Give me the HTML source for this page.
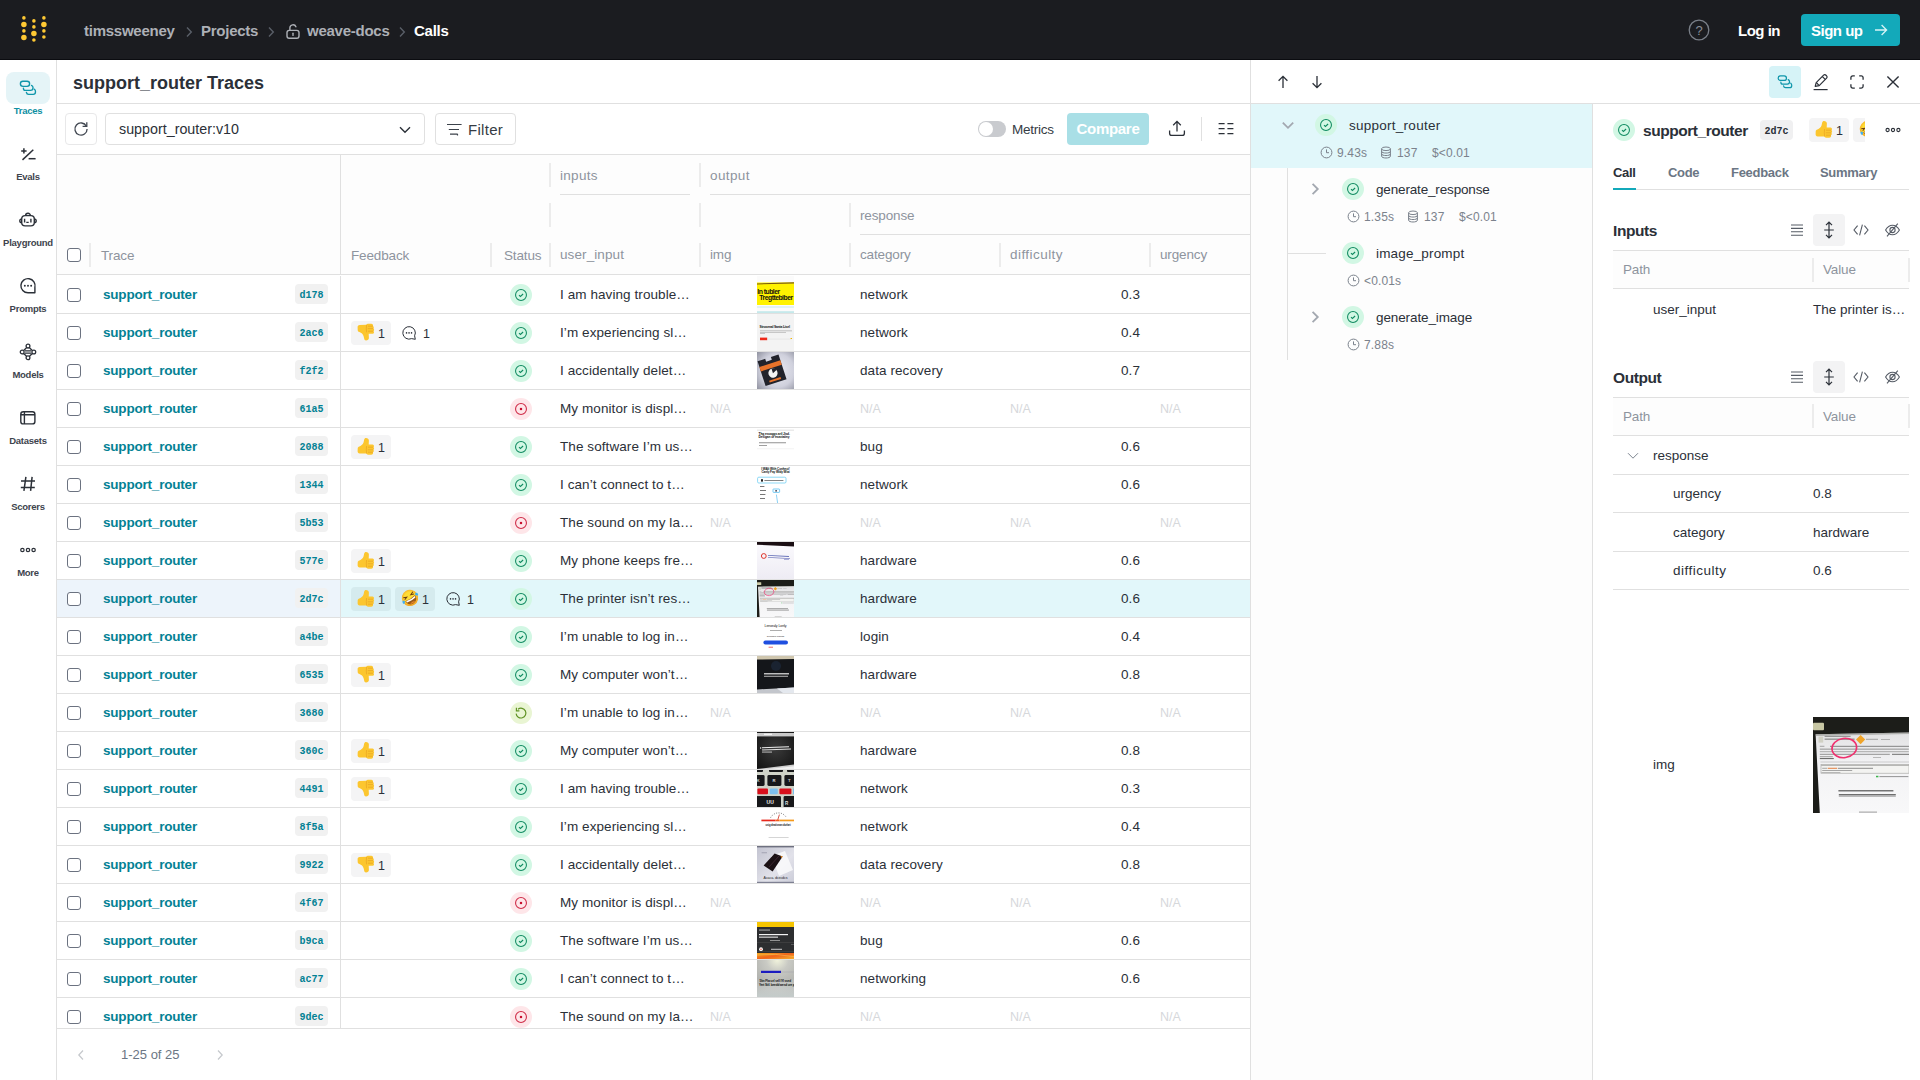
<!DOCTYPE html>
<html lang="en"><head><meta charset="utf-8"><title>support_router Traces</title>
<style>
*{box-sizing:border-box;margin:0;padding:0}
html,body{width:1920px;height:1080px;overflow:hidden;background:#fff}
body{font-family:"Liberation Sans",sans-serif;color:#2b3038;font-size:14px;position:relative}
.abs{position:absolute}
svg{display:block;overflow:visible}
.nw{white-space:nowrap}
/* top bar */
#top{position:absolute;left:0;top:0;width:1920px;height:60px;background:#1b1c20;border-bottom:1px solid #0b0c10}
.bc{position:absolute;top:21px;height:20px;line-height:20px;font-size:15px;font-weight:700;color:#adb0b6;white-space:nowrap;letter-spacing:-0.25px}
.bcs{position:absolute;top:26px}
/* sidebar */
#side{position:absolute;left:0;top:60px;width:57px;height:1020px;border-right:1px solid #e0e0e0;background:#fff}
.si{position:absolute;left:0;width:56px;text-align:center}
.si .lb{position:absolute;left:-10px;width:76px;top:44px;font-size:9.5px;font-weight:700;color:#3e444d;line-height:14px;text-align:center;letter-spacing:-0.25px}
.si svg{position:absolute;left:18px;top:18px}
/* main */
#title{position:absolute;left:57px;top:60px;width:1193px;height:44px;border-bottom:1px solid #e0e0e0}
#title h1{position:absolute;left:16px;top:11px;font-size:18px;line-height:24px;font-weight:700;color:#2b3038;white-space:nowrap;letter-spacing:0}
#tools{position:absolute;left:57px;top:104px;width:1193px;height:51px;border-bottom:1px solid #e0e0e0}
.btn{position:absolute;border:1px solid #e0e0e0;border-radius:4px;background:#fff}
/* table */
#thead{position:absolute;left:57px;top:155px;width:1193px;height:120px;background:#fdfdfd;border-bottom:1px solid #e0e0e0}
.hsep{position:absolute;width:2px;height:24px;background:#ececec;margin-left:-1px}
.hl{position:absolute;height:1px;background:#e0e0e0}
.ht{position:absolute;font-size:13.5px;line-height:20px;color:#8e949e;white-space:nowrap;letter-spacing:-0.15px;margin-top:1px}
#rows{position:absolute;left:57px;top:276px;width:1193px;height:753px;overflow:hidden;border-bottom:1px solid #e0e0e0}
.r{position:absolute;left:0;width:1193px;height:38px;border-bottom:1px solid #e0e0e0}
.r.sel{background:#e2f7fa}
.r.sel .pin{background:#edf4fb}
.pin{position:absolute;left:0;top:0;width:284px;height:37px;border-right:1px solid #e0e0e0;background:#fff}
.cb{position:absolute;left:10px;top:12px;width:14px;height:14px;border:1px solid #6b7280;border-radius:3px;background:#fff}
.nm{position:absolute;left:46px;top:9px;font-size:13.5px;line-height:20px;font-weight:700;color:#038194;white-space:nowrap;letter-spacing:-0.2px}
.idb{position:absolute;left:238px;top:8px;width:33px;height:20px;border-radius:4px;background:#f1f1f1;font-family:"Liberation Mono",monospace;font-weight:700;font-size:10px;line-height:24px;text-align:center;color:#038194}
.c{position:absolute;top:9px;font-size:13.5px;line-height:20px;white-space:nowrap;color:#2b3038;letter-spacing:0.08px}
.na{color:#d6d8db;font-size:12.5px;letter-spacing:0}
.st{position:absolute;left:453px;top:8px;width:22px;height:22px;border-radius:11px}
.st.ok{background:#d2f7e4}
.st.er{background:#fee6e9}
.st.run{background:#e9f5d3}
.st svg{position:absolute;left:3px;top:3px}
.th{position:absolute;left:700px;top:0;width:37px;height:37px;overflow:hidden}
.chip{position:absolute;top:7px;height:24px;width:40px;border-radius:4px;background:#f4f4f5}
.r.sel .chip{background:#d5ebee}
.chip svg{position:absolute;left:6px;top:2px}
.chip b{position:absolute;left:27px;top:3px;font-size:12.5px;line-height:20px;font-weight:400;color:#2b3038}
.cm{position:absolute;top:7px;height:23px;width:40px}
.cm svg{position:absolute;left:6px;top:5px}
.cm b{position:absolute;left:28px;top:3px;font-size:12.5px;line-height:20px;font-weight:400;color:#2b3038}
#foot{position:absolute;left:57px;top:1029px;width:1193px;height:51px}
/* right panel */
#rp{position:absolute;left:1250px;top:60px;width:670px;height:1020px;border-left:1px solid #e0e0e0;background:#fff}
#rph{position:absolute;left:0;top:0;width:669px;height:44px;border-bottom:1px solid #e0e0e0}
#tree{position:absolute;left:0;top:44px;width:342px;height:976px;border-right:1px solid #e0e0e0;background:#fdfdfd}
.tn{position:absolute;font-size:13.5px;line-height:20px;color:#2b3038;white-space:nowrap;letter-spacing:0;margin-top:1px}
.ts{position:absolute;font-size:12px;line-height:18px;color:#7b828c;white-space:nowrap;letter-spacing:0.15px;margin-top:1px}
.sti{position:absolute;width:22px;height:22px;border-radius:11px;background:#d2f7e4}
.sti svg{position:absolute;left:3px;top:3px}
#det{position:absolute;left:342px;top:44px;width:327px;height:976px;overflow:hidden;background:#fff}
.tab{position:absolute;top:59px;font-size:13px;line-height:20px;font-weight:700;color:#6b7684;white-space:nowrap;letter-spacing:-0.3px}
.sec{position:absolute;left:20px;font-size:15.5px;line-height:22px;font-weight:700;color:#2b3038;letter-spacing:-0.4px;margin-top:1px}
.dt{position:absolute;font-size:13.5px;line-height:20px;color:#2b3038;white-space:nowrap;letter-spacing:0;margin-top:1px}
.dhh{font-size:13.5px;color:#8e949e;letter-spacing:-0.15px;margin-top:0}
.dh{position:absolute;left:20px;width:296px;height:39px;background:#fdfdfd;border-top:1px solid #e0e0e0;border-bottom:1px solid #e0e0e0}
.dl{position:absolute;left:20px;width:296px;height:1px;background:#e0e0e0}
</style></head><body>
<div id="top">
 <svg class="abs" style="left:20px;top:14px" width="28" height="30" viewBox="20 14 28 30">
  <g fill="#ffc933">
   <circle cx="23.9" cy="17.9" r="1.8"/><circle cx="23.9" cy="24.5" r="2.75"/><circle cx="23.9" cy="30.9" r="1.8"/><circle cx="23.9" cy="37.5" r="2.75"/>
   <circle cx="33.9" cy="20.9" r="1.8"/><circle cx="33.9" cy="26.9" r="1.8"/><circle cx="33.9" cy="33.4" r="2.75"/><circle cx="33.9" cy="40" r="1.8"/>
   <circle cx="43.9" cy="17.9" r="1.8"/><circle cx="43.9" cy="24.5" r="2.75"/><circle cx="43.9" cy="30.9" r="1.8"/><circle cx="43.9" cy="37" r="1.8"/>
  </g>
 </svg>
 <div class="bc" style="left:84px">timssweeney</div>
 <svg class="bcs" style="left:185px" width="8" height="12" viewBox="0 0 8 12"><path d="M2 1.5 L6.3 6 L2 10.5" fill="none" stroke="#5a5f68" stroke-width="1.4"/></svg>
 <div class="bc" style="left:201px">Projects</div>
 <svg class="bcs" style="left:267px" width="8" height="12" viewBox="0 0 8 12"><path d="M2 1.5 L6.3 6 L2 10.5" fill="none" stroke="#5a5f68" stroke-width="1.4"/></svg>
 <svg class="abs" style="left:285px;top:23px" width="16" height="17" viewBox="0 0 16 17"><g fill="none" stroke="#adb0b6" stroke-width="1.4" stroke-linecap="round"><rect x="2" y="7.4" width="12" height="7.8" rx="2.2"/><path d="M4.9 7.2 V4.8 a3.1 3.1 0 0 1 6 -1"/><path d="M8 10.2 v2.2"/></g></svg>
 <div class="bc" style="left:307px">weave-docs</div>
 <svg class="bcs" style="left:398px" width="8" height="12" viewBox="0 0 8 12"><path d="M2 1.5 L6.3 6 L2 10.5" fill="none" stroke="#5a5f68" stroke-width="1.4"/></svg>
 <div class="bc" style="left:414px;color:#fff">Calls</div>
 <svg class="abs" style="left:1688px;top:19px" width="22" height="22" viewBox="0 0 22 22"><circle cx="11" cy="11" r="9.8" fill="none" stroke="#7a7f88" stroke-width="1.3"/><text x="11" y="15.6" text-anchor="middle" font-family="Liberation Sans, sans-serif" font-size="13" fill="#8a8f98">?</text></svg>
 <div class="bc" style="left:1738px;color:#fff;font-size:15px;letter-spacing:-0.5px">Log in</div>
 <div class="abs" style="left:1801px;top:14px;width:99px;height:32px;border-radius:4px;background:#13a9ba">
  <div class="abs nw" style="left:10px;top:7px;line-height:20px;font-size:15px;font-weight:700;color:#fff;letter-spacing:-0.5px">Sign up</div>
  <svg class="abs" style="left:73px;top:9px" width="14" height="14" viewBox="0 0 14 14"><path d="M1 7 H12.5 M7.6 2 L12.6 7 L7.6 12" fill="none" stroke="#d7f3f6" stroke-width="1.3"/></svg>
 </div>
</div>
<div id="side">
 <div class="abs" style="left:6px;top:12px;width:44px;height:32px;border-radius:8px;background:#e5f4f7"></div>
 <div class="si" style="top:0">
  <svg width="20" height="20" viewBox="0 0 20 20"><g fill="none" stroke="#0f96aa" stroke-width="1.35" stroke-linecap="round"><rect x="2.4" y="3.2" width="9.2" height="5.1" rx="2.5"/><path d="M5.4 10.2 C5.4 11.6 6.2 12.4 7.4 12.4 H12.6 C14.2 12.4 15.05 11.4 15.05 9.8 C15.05 8.6 14.4 7.8 13.5 7.4"/><path d="M8.4 14.4 C8.6 15.6 9.4 16.35 10.6 16.35 H15.2 C16.8 16.35 17.5 15.4 17.5 13.8 C17.5 12.6 17 11.8 16.4 11.3"/></g></svg>
  <div class="lb" style="color:#0f8fa3">Traces</div>
 </div>
 <div class="si" style="top:66px">
  <svg width="20" height="20" viewBox="0 0 20 20"><g fill="none" stroke="#2b3038" stroke-width="1.5"><path d="M4.5 15.9 L15.3 5.7"/><path d="M3.2 6.9 h5.4 M5.9 4.2 v5.4"/><path d="M10.6 14.7 h7"/></g></svg>
  <div class="lb">Evals</div>
 </div>
 <div class="si" style="top:132px">
  <svg width="20" height="20" viewBox="0 0 20 20"><g fill="none" stroke="#2b3038" stroke-width="1.4"><rect x="3.7" y="5.6" width="12.6" height="10.3" rx="3.4"/><path d="M7.6 5.6 a2.4 2.4 0 0 1 4.8 0"/><path d="M3.7 8.9 a1.9 1.9 0 0 0 0 3.8 M16.3 8.9 a1.9 1.9 0 0 1 0 3.8"/><path d="M6.6 8.7 v3.8 M12.9 8.7 v3.8 M8.3 12.4 h2.4"/></g></svg>
  <div class="lb">Playground</div>
 </div>
 <div class="si" style="top:198px">
  <svg width="20" height="20" viewBox="0 0 20 20"><g fill="none" stroke="#2b3038" stroke-width="1.4"><path d="M16.9 16.8 H10 A7.1 7.1 0 1 1 16.9 11.4 Z" stroke-linejoin="round"/></g><g fill="#2b3038"><circle cx="6.85" cy="9.8" r="0.95"/><circle cx="10" cy="9.8" r="0.95"/><circle cx="13.15" cy="9.8" r="0.95"/></g></svg>
  <div class="lb">Prompts</div>
 </div>
 <div class="si" style="top:264px">
  <svg width="20" height="20" viewBox="0 0 20 20"><g fill="none" stroke="#2b3038" stroke-width="1.3"><circle cx="10" cy="4.1" r="1.9"/><circle cx="10" cy="15.8" r="1.9"/><circle cx="4.2" cy="10" r="1.9"/><circle cx="15.8" cy="10" r="1.9"/><path d="M5.7 8.5 L8.5 5.7 M11.5 5.7 L14.3 8.5 M14.3 11.5 L11.5 14.3 M8.5 14.3 L5.7 11.5 M7 8.9 H13 M7 11.1 H13"/></g></svg>
  <div class="lb">Models</div>
 </div>
 <div class="si" style="top:330px">
  <svg width="20" height="20" viewBox="0 0 20 20"><g fill="none" stroke="#2b3038" stroke-width="1.4"><rect x="2.8" y="3.8" width="14.1" height="12.1" rx="2.5"/><path d="M2.8 6.7 H16.9 M6.4 3.8 V15.9"/></g></svg>
  <div class="lb">Datasets</div>
 </div>
 <div class="si" style="top:396px">
  <svg width="20" height="20" viewBox="0 0 20 20"><g fill="none" stroke="#2b3038" stroke-width="1.5"><path d="M7.9 2.9 L5.9 16.9 M14.1 2.9 L12.6 16.9 M3 7 H17 M2.8 13.4 H16.8"/></g></svg>
  <div class="lb">Scorers</div>
 </div>
 <div class="si" style="top:462px">
  <svg width="20" height="20" viewBox="0 0 20 20"><g fill="none" stroke="#2b3038" stroke-width="1.2"><circle cx="4.4" cy="10" r="1.7"/><circle cx="10" cy="10" r="1.7"/><circle cx="15.6" cy="10" r="1.7"/></g></svg>
  <div class="lb">More</div>
 </div>
</div>
<div id="title"><h1>support_router Traces</h1></div>
<div id="tools">
 <div class="btn" style="left:8px;top:9px;width:32px;height:32px;border-color:#e8e8e9"><svg class="abs" style="left:7px;top:7px" width="16" height="16" viewBox="0 0 16 16"><path d="M14.1 8 A6.1 6.1 0 1 1 13.4 5.2" fill="none" stroke="#414751" stroke-width="1.3"/><path d="M13.8 1.2 V5.4 H9.6" fill="none" stroke="#414751" stroke-width="1.3"/></svg></div>
 <div class="btn" style="left:48px;top:9px;width:320px;height:32px">
  <div class="abs nw" style="left:13px;top:5px;line-height:20px;font-size:14.3px;color:#2b3038">support_router:v10</div>
  <svg class="abs" style="left:293px;top:12px" width="12" height="8" viewBox="0 0 12 8"><path d="M1 1.2 L6 6.2 L11 1.2" fill="none" stroke="#2b3038" stroke-width="1.4"/></svg>
 </div>
 <div class="btn" style="left:378px;top:9px;width:81px;height:32px">
  <svg class="abs" style="left:11px;top:8px" width="14" height="14" viewBox="0 0 14 14"><path d="M0 2.5 H14.6 M1.8 7.5 H12 M3 12.1 H10.7 M10.5 12.1 V13.6" fill="none" stroke="#3c424b" stroke-width="1.2"/></svg>
  <div class="abs nw" style="left:32px;top:6px;line-height:20px;font-size:15px;color:#363c44;letter-spacing:0.3px">Filter</div>
 </div>
 <div class="abs" style="left:921px;top:17px;width:28px;height:16px;border-radius:8px;background:#c9cbcf"><div class="abs" style="left:1px;top:1px;width:14px;height:14px;border-radius:7px;background:#fff"></div></div>
 <div class="abs nw" style="left:955px;top:16px;line-height:20px;font-size:13.5px;color:#363c44;letter-spacing:-0.24px">Metrics</div>
 <div class="abs" style="left:1010px;top:9px;width:82px;height:32px;border-radius:4px;background:#a9dfe6"><div class="abs nw" style="left:0;width:82px;text-align:center;top:6px;line-height:20px;font-size:15px;font-weight:700;color:#fff;letter-spacing:-0.3px">Compare</div></div>
 <svg class="abs" style="left:1111px;top:16px" width="18" height="18" viewBox="0 0 18 18"><path d="M9 11.6 V1.6 M5.2 5.2 L9 1.4 L12.8 5.2 M1.6 10.6 V13.2 A2.2 2.2 0 0 0 3.8 15.4 H14.2 A2.2 2.2 0 0 0 16.4 13.2 V10.6" fill="none" stroke="#2b3038" stroke-width="1.3"/></svg>
 <div class="abs" style="left:1144px;top:13px;width:1px;height:24px;background:#e0e0e0"></div>
 <svg class="abs" style="left:1161px;top:18px" width="16" height="14" viewBox="0 0 16 14"><path d="M0.6 1.6 H6.6 M9.4 1.6 H15.4 M0.6 6.6 H6.6 M9.4 6.6 H15.4 M0.6 11.6 H6.6 M9.4 11.6 H15.4" fill="none" stroke="#2b3038" stroke-width="1.3"/></svg>
</div>
<div id="thead">
 <div class="abs" style="left:283px;top:0;width:1px;height:120px;background:#e0e0e0"></div>
 <div class="hsep" style="left:493px;top:8px"></div><div class="hsep" style="left:643px;top:8px"></div>
 <div class="hsep" style="left:493px;top:48px"></div><div class="hsep" style="left:643px;top:48px"></div><div class="hsep" style="left:793px;top:48px"></div>
 <div class="hsep" style="left:33px;top:88px"></div><div class="hsep" style="left:434px;top:88px"></div><div class="hsep" style="left:493px;top:88px"></div><div class="hsep" style="left:643px;top:88px"></div><div class="hsep" style="left:793px;top:88px"></div><div class="hsep" style="left:943px;top:88px"></div><div class="hsep" style="left:1093px;top:88px"></div>
 <div class="hl" style="left:503px;top:39px;width:130px"></div>
 <div class="hl" style="left:653px;top:39px;width:540px"></div>
 <div class="hl" style="left:803px;top:79px;width:390px"></div>
 <div class="ht" style="left:503px;top:10px;letter-spacing:0.3px">inputs</div>
 <div class="ht" style="left:653px;top:10px;letter-spacing:0.4px">output</div>
 <div class="ht" style="left:803px;top:50px">response</div>
 <span class="cb" style="top:93px"></span>
 <div class="ht" style="left:44px;top:90px">Trace</div>
 <div class="ht" style="left:294px;top:90px">Feedback</div>
 <div class="ht" style="left:447px;top:90px">Status</div>
 <div class="ht" style="left:503px;top:89px;letter-spacing:0.1px">user_input</div>
 <div class="ht" style="left:653px;top:89px">img</div>
 <div class="ht" style="left:803px;top:89px">category</div>
 <div class="ht" style="left:953px;top:89px;letter-spacing:0.45px">difficulty</div>
 <div class="ht" style="left:1103px;top:89px">urgency</div>
</div>
<div id="rows">
<div class="r" style="top:0px"><div class="pin"><span class="cb"></span><span class="nm">support_router</span><span class="idb">d178</span></div><span class="st ok"><svg width="16" height="16" viewBox="0 0 16 16"><circle cx="8" cy="8" r="5.45" fill="none" stroke="#0f8a60" stroke-width="1.05"/><path d="M6 8.2 L7.4 9.5 L10.1 7" fill="none" stroke="#0f8a60" stroke-width="1.1"/></svg></span><span class="c" style="left:503px">I am having trouble…</span><svg class="th" viewBox="0 0 37 37" preserveAspectRatio="none"><rect width="37" height="37" fill="#fbfbfb"/><rect y="6.5" width="37" height="22.5" fill="#fff200"/><path d="M0 7.4 L37 6.2 V7.4 L0 8.4 Z" fill="#7a5a10"/><text x="0.3" y="17.8" font-size="6.8" font-family="Liberation Sans, sans-serif" font-weight="700" fill="#111" letter-spacing="-0.5">In tubler</text><text x="2.3" y="24.3" font-size="6.8" font-family="Liberation Sans, sans-serif" font-weight="700" fill="#111" letter-spacing="-0.5">Tregttebiber</text><rect y="30.6" width="37" height="0.8" fill="#bfe6e8"/><rect y="35.6" width="37" height="0.9" fill="#8fd8dc"/></svg><span class="c" style="left:803px">network</span><span class="c" style="left:1040px;width:43px;text-align:right">0.3</span></div>
<div class="r" style="top:38px"><div class="pin"><span class="cb"></span><span class="nm">support_router</span><span class="idb">2ac6</span></div><span class="chip" style="left:294px"><svg width="18" height="18" viewBox="0 0 18 18"><g transform="translate(0,18.4) scale(1,-1)"><path d="M9 0.9 C10.6 0.9 11.9 1.8 11.9 3.4 L11.7 7.6 L15.6 7.6 C17.2 7.8 17.4 9.6 16.5 10.2 C17.4 10.9 17.3 12.4 16.4 12.8 C17.1 13.5 16.9 15 16 15.2 C16.4 16.4 15.6 17.7 14.2 17.7 L11 17.7 C10.2 17.7 9.6 17.2 9.2 16.6 L2.6 16.4 C1.2 16.4 0.6 15.4 0.6 14.2 L0.7 11.4 C0.7 10.2 1.4 9.6 2.4 9.4 C4.4 8.8 6 7.2 6.6 5.2 L7.2 2.6 C7.4 1.6 8 0.9 9 0.9 Z" fill="#fcc62f"/><path d="M11 10.2 H16.2 M10.8 12.8 H16.2 M11 15.2 H15.8 M9.6 9 C9.2 11 9.2 14 9.6 16.4" fill="none" stroke="#e8a422" stroke-width="0.7"/></g></svg><b>1</b></span><span class="cm" style="left:338px"><svg width="16" height="16" viewBox="0 0 16 16"><path d="M14.3 13.3 L10.6 12.6 A6.25 6.25 0 1 1 13.6 9.8 Z" fill="none" stroke="#2b3038" stroke-width="1" stroke-linejoin="round"/><g fill="#2b3038"><circle cx="5.55" cy="6.9" r="0.78"/><circle cx="8.05" cy="6.9" r="0.78"/><circle cx="10.55" cy="6.9" r="0.78"/></g></svg><b>1</b></span><span class="st ok"><svg width="16" height="16" viewBox="0 0 16 16"><circle cx="8" cy="8" r="5.45" fill="none" stroke="#0f8a60" stroke-width="1.05"/><path d="M6 8.2 L7.4 9.5 L10.1 7" fill="none" stroke="#0f8a60" stroke-width="1.1"/></svg></span><span class="c" style="left:503px">I’m experiencing sl…</span><svg class="th" viewBox="0 0 37 37" preserveAspectRatio="none"><rect width="37" height="37" fill="#f3f3f3"/><text x="2.6" y="14" font-size="3.4" font-family="Liberation Sans, sans-serif" font-weight="700" fill="#111" letter-spacing="-0.2">Strosenal Santa Lisel</text><rect x="3" y="16.6" width="32" height="0.6" fill="#999"/><rect x="3" y="18" width="26" height="0.6" fill="#aaa"/><rect x="3" y="19.4" width="5" height="0.6" fill="#aaa"/><rect x="3" y="23.6" width="7.2" height="2.6" fill="#ee2a1a"/><rect x="10.2" y="24.8" width="24" height="0.5" fill="#ddd"/><rect x="33.6" y="24" width="1.4" height="1" fill="#f0b400"/></svg><span class="c" style="left:803px">network</span><span class="c" style="left:1040px;width:43px;text-align:right">0.4</span></div>
<div class="r" style="top:76px"><div class="pin"><span class="cb"></span><span class="nm">support_router</span><span class="idb">f2f2</span></div><span class="st ok"><svg width="16" height="16" viewBox="0 0 16 16"><circle cx="8" cy="8" r="5.45" fill="none" stroke="#0f8a60" stroke-width="1.05"/><path d="M6 8.2 L7.4 9.5 L10.1 7" fill="none" stroke="#0f8a60" stroke-width="1.1"/></svg></span><span class="c" style="left:503px">I accidentally delet…</span><svg class="th" viewBox="0 0 37 37" preserveAspectRatio="none"><defs><radialGradient id="gf2" cx="0.55" cy="0.5" r="0.75"><stop offset="0" stop-color="#ebecf3"/><stop offset="0.6" stop-color="#cfd0dc"/><stop offset="1" stop-color="#8e909e"/></radialGradient></defs><rect width="37" height="37" fill="url(#gf2)"/><g transform="rotate(-18 16 18)"><path d="M4 5 H12 V8 H18 V5 H26 V31 H4 Z" fill="#22232b"/><rect x="4" y="11" width="22" height="4.6" fill="#e8732a"/><circle cx="15" cy="21" r="4.6" fill="#f4f4f4"/><path d="M15 21 L19.6 19 A4.6 4.6 0 0 0 15 16.4 Z" fill="#22232b"/><rect x="9" y="27" width="12" height="2" fill="#e8732a"/></g></svg><span class="c" style="left:803px">data recovery</span><span class="c" style="left:1040px;width:43px;text-align:right">0.7</span></div>
<div class="r" style="top:114px"><div class="pin"><span class="cb"></span><span class="nm">support_router</span><span class="idb">61a5</span></div><span class="st er"><svg width="16" height="16" viewBox="0 0 16 16"><circle cx="8" cy="8" r="5.45" fill="none" stroke="#cf2c48" stroke-width="1.1"/><rect x="6.9" y="6.9" width="2.2" height="2.2" fill="#c8102e"/></svg></span><span class="c" style="left:503px">My monitor is displ…</span><span class="c na" style="left:653px">N/A</span><span class="c na" style="left:803px">N/A</span><span class="c na" style="left:953px">N/A</span><span class="c na" style="left:1103px">N/A</span></div>
<div class="r" style="top:152px"><div class="pin"><span class="cb"></span><span class="nm">support_router</span><span class="idb">2088</span></div><span class="chip" style="left:294px"><svg width="18" height="18" viewBox="0 0 18 18"><path d="M9 0.9 C10.6 0.9 11.9 1.8 11.9 3.4 L11.7 7.6 L15.6 7.6 C17.2 7.8 17.4 9.6 16.5 10.2 C17.4 10.9 17.3 12.4 16.4 12.8 C17.1 13.5 16.9 15 16 15.2 C16.4 16.4 15.6 17.7 14.2 17.7 L11 17.7 C10.2 17.7 9.6 17.2 9.2 16.6 L2.6 16.4 C1.2 16.4 0.6 15.4 0.6 14.2 L0.7 11.4 C0.7 10.2 1.4 9.6 2.4 9.4 C4.4 8.8 6 7.2 6.6 5.2 L7.2 2.6 C7.4 1.6 8 0.9 9 0.9 Z" fill="#fcc62f"/><path d="M11 10.2 H16.2 M10.8 12.8 H16.2 M11 15.2 H15.8 M9.6 9 C9.2 11 9.2 14 9.6 16.4" fill="none" stroke="#e8a422" stroke-width="0.7"/></svg><b>1</b></span><span class="st ok"><svg width="16" height="16" viewBox="0 0 16 16"><circle cx="8" cy="8" r="5.45" fill="none" stroke="#0f8a60" stroke-width="1.05"/><path d="M6 8.2 L7.4 9.5 L10.1 7" fill="none" stroke="#0f8a60" stroke-width="1.1"/></svg></span><span class="c" style="left:503px">The software I’m us…</span><svg class="th" viewBox="0 0 37 37" preserveAspectRatio="none"><rect width="37" height="37" fill="#fff"/><rect y="1.6" width="37" height="1.2" fill="#e6e6e6"/><text x="1.6" y="6.8" font-size="3.3" font-family="Liberation Sans, sans-serif" font-weight="700" fill="#111" letter-spacing="-0.15">Thg essaggs aril Jisd.</text><text x="1.6" y="10.4" font-size="3.3" font-family="Liberation Sans, sans-serif" font-weight="700" fill="#111" letter-spacing="-0.15">Desigan or esaviatiny</text><rect x="2" y="14.4" width="27" height="0.8" fill="#777"/><rect x="2" y="17" width="8" height="0.8" fill="#888"/><rect y="20.4" width="37" height="0.8" fill="#f0f0f0"/></svg><span class="c" style="left:803px">bug</span><span class="c" style="left:1040px;width:43px;text-align:right">0.6</span></div>
<div class="r" style="top:190px"><div class="pin"><span class="cb"></span><span class="nm">support_router</span><span class="idb">1344</span></div><span class="st ok"><svg width="16" height="16" viewBox="0 0 16 16"><circle cx="8" cy="8" r="5.45" fill="none" stroke="#0f8a60" stroke-width="1.05"/><path d="M6 8.2 L7.4 9.5 L10.1 7" fill="none" stroke="#0f8a60" stroke-width="1.1"/></svg></span><span class="c" style="left:503px">I can’t connect to t…</span><svg class="th" viewBox="0 0 37 37" preserveAspectRatio="none"><rect width="37" height="37" fill="#fff"/><text x="18.5" y="3.8" text-anchor="middle" font-size="3.1" font-family="Liberation Sans, sans-serif" font-weight="700" fill="#111" letter-spacing="-0.1">I WAIt With Conhect!</text><text x="18.5" y="7" text-anchor="middle" font-size="3.1" font-family="Liberation Sans, sans-serif" font-weight="700" fill="#111" letter-spacing="-0.1">Canly Fay Widy Wiai</text><rect x="0.6" y="11.2" width="28.4" height="5.8" rx="1.2" fill="#fff" stroke="#5cc8f2" stroke-width="0.7"/><rect x="4" y="13.2" width="2" height="2.4" fill="#222"/><rect x="7.4" y="14" width="19" height="0.8" fill="#666"/><rect x="3" y="20.2" width="4.4" height="0.8" fill="#555"/><rect x="3" y="24.2" width="6" height="0.8" fill="#555"/><rect x="3" y="28.2" width="5.4" height="0.8" fill="#555"/><rect x="3" y="32.2" width="5" height="0.8" fill="#555"/><rect x="16" y="23" width="6.6" height="3.4" rx="0.6" fill="#fff" stroke="#3db4ee" stroke-width="0.7"/><rect x="18.4" y="24" width="1.4" height="1.6" fill="#334"/><path d="M19.4 28.6 L20.6 37" stroke="#3db4ee" stroke-width="0.6" fill="none"/></svg><span class="c" style="left:803px">network</span><span class="c" style="left:1040px;width:43px;text-align:right">0.6</span></div>
<div class="r" style="top:228px"><div class="pin"><span class="cb"></span><span class="nm">support_router</span><span class="idb">5b53</span></div><span class="st er"><svg width="16" height="16" viewBox="0 0 16 16"><circle cx="8" cy="8" r="5.45" fill="none" stroke="#cf2c48" stroke-width="1.1"/><rect x="6.9" y="6.9" width="2.2" height="2.2" fill="#c8102e"/></svg></span><span class="c" style="left:503px">The sound on my la…</span><span class="c na" style="left:653px">N/A</span><span class="c na" style="left:803px">N/A</span><span class="c na" style="left:953px">N/A</span><span class="c na" style="left:1103px">N/A</span></div>
<div class="r" style="top:266px"><div class="pin"><span class="cb"></span><span class="nm">support_router</span><span class="idb">577e</span></div><span class="chip" style="left:294px"><svg width="18" height="18" viewBox="0 0 18 18"><path d="M9 0.9 C10.6 0.9 11.9 1.8 11.9 3.4 L11.7 7.6 L15.6 7.6 C17.2 7.8 17.4 9.6 16.5 10.2 C17.4 10.9 17.3 12.4 16.4 12.8 C17.1 13.5 16.9 15 16 15.2 C16.4 16.4 15.6 17.7 14.2 17.7 L11 17.7 C10.2 17.7 9.6 17.2 9.2 16.6 L2.6 16.4 C1.2 16.4 0.6 15.4 0.6 14.2 L0.7 11.4 C0.7 10.2 1.4 9.6 2.4 9.4 C4.4 8.8 6 7.2 6.6 5.2 L7.2 2.6 C7.4 1.6 8 0.9 9 0.9 Z" fill="#fcc62f"/><path d="M11 10.2 H16.2 M10.8 12.8 H16.2 M11 15.2 H15.8 M9.6 9 C9.2 11 9.2 14 9.6 16.4" fill="none" stroke="#e8a422" stroke-width="0.7"/></svg><b>1</b></span><span class="st ok"><svg width="16" height="16" viewBox="0 0 16 16"><circle cx="8" cy="8" r="5.45" fill="none" stroke="#0f8a60" stroke-width="1.05"/><path d="M6 8.2 L7.4 9.5 L10.1 7" fill="none" stroke="#0f8a60" stroke-width="1.1"/></svg></span><span class="c" style="left:503px">My phone keeps fre…</span><svg class="th" viewBox="0 0 37 37" preserveAspectRatio="none"><defs><linearGradient id="g57" x1="0" y1="0" x2="0" y2="1"><stop offset="0" stop-color="#fbfafd"/><stop offset="1" stop-color="#eeecf4"/></linearGradient></defs><rect width="37" height="37" fill="url(#g57)"/><path d="M0 0 H37 V4.4 L0 2.8 Z" fill="#190d12"/><circle cx="6.8" cy="14" r="2.4" fill="none" stroke="#e0332a" stroke-width="1"/><rect x="11" y="13" width="21" height="0.8" fill="#6670b8" transform="rotate(3 11 13)"/><rect x="11" y="15" width="22" height="0.8" fill="#7a80c0" transform="rotate(3 11 15)"/><rect x="27" y="17.2" width="5" height="0.7" fill="#8a8fcc"/></svg><span class="c" style="left:803px">hardware</span><span class="c" style="left:1040px;width:43px;text-align:right">0.6</span></div>
<div class="r sel" style="top:304px"><div class="pin"><span class="cb"></span><span class="nm">support_router</span><span class="idb">2d7c</span></div><span class="chip" style="left:294px"><svg width="18" height="18" viewBox="0 0 18 18"><path d="M9 0.9 C10.6 0.9 11.9 1.8 11.9 3.4 L11.7 7.6 L15.6 7.6 C17.2 7.8 17.4 9.6 16.5 10.2 C17.4 10.9 17.3 12.4 16.4 12.8 C17.1 13.5 16.9 15 16 15.2 C16.4 16.4 15.6 17.7 14.2 17.7 L11 17.7 C10.2 17.7 9.6 17.2 9.2 16.6 L2.6 16.4 C1.2 16.4 0.6 15.4 0.6 14.2 L0.7 11.4 C0.7 10.2 1.4 9.6 2.4 9.4 C4.4 8.8 6 7.2 6.6 5.2 L7.2 2.6 C7.4 1.6 8 0.9 9 0.9 Z" fill="#fcc62f"/><path d="M11 10.2 H16.2 M10.8 12.8 H16.2 M11 15.2 H15.8 M9.6 9 C9.2 11 9.2 14 9.6 16.4" fill="none" stroke="#e8a422" stroke-width="0.7"/></svg><b>1</b></span><span class="chip" style="left:338px"><svg width="18" height="18" viewBox="0 0 18 18"><defs><radialGradient id="gr" cx="0.5" cy="0.45" r="0.55"><stop offset="0.55" stop-color="#ffdd35"/><stop offset="1" stop-color="#f39c1e"/></radialGradient></defs><g transform="rotate(-32 9 8.9)"><circle cx="9" cy="8.9" r="8.2" fill="url(#gr)"/><path d="M3.2 9.2 Q9 10.6 14.8 9.2 Q14.4 15.4 9 15.4 Q3.6 15.4 3.2 9.2 Z" fill="#9a5a18"/><path d="M3.9 9.7 Q9 11 14.1 9.7 L13.8 11.4 Q9 12.4 4.2 11.4 Z" fill="#fff"/><path d="M6 14 Q9 12.6 12 14 Q9 15.8 6 14 Z" fill="#e8862a"/><path d="M3.4 5.2 L6.6 6.6 L3.6 7.6 M14.6 5.2 L11.4 6.6 L14.4 7.6" fill="none" stroke="#6a3c12" stroke-width="1"/><path d="M1.2 7.4 Q-0.8 9.6 0.8 11 Q2.8 10.6 3 8.4 Z M16.8 7.4 Q18.8 9.6 17.2 11 Q15.2 10.6 15 8.4 Z" fill="#3fb0f0"/></g></svg><b>1</b></span><span class="cm" style="left:382px"><svg width="16" height="16" viewBox="0 0 16 16"><path d="M14.3 13.3 L10.6 12.6 A6.25 6.25 0 1 1 13.6 9.8 Z" fill="none" stroke="#2b3038" stroke-width="1" stroke-linejoin="round"/><g fill="#2b3038"><circle cx="5.55" cy="6.9" r="0.78"/><circle cx="8.05" cy="6.9" r="0.78"/><circle cx="10.55" cy="6.9" r="0.78"/></g></svg><b>1</b></span><span class="st ok"><svg width="16" height="16" viewBox="0 0 16 16"><circle cx="8" cy="8" r="5.45" fill="none" stroke="#0f8a60" stroke-width="1.05"/><path d="M6 8.2 L7.4 9.5 L10.1 7" fill="none" stroke="#0f8a60" stroke-width="1.1"/></svg></span><span class="c" style="left:503px">The printer isn’t res…</span><svg class="th" viewBox="0 0 96 96" preserveAspectRatio="none"><defs><linearGradient id="gpp" x1="0" y1="0" x2="0" y2="1"><stop offset="0.15" stop-color="#e2e2e3"/><stop offset="0.5" stop-color="#f3f3f5"/><stop offset="1" stop-color="#f8f8f9"/></linearGradient></defs><rect width="96" height="96" fill="url(#gpp)"/><path d="M0 0 H96 V15.4 L2.6 17.2 L6.8 96 H0 Z" fill="#1c1d19"/><path d="M2.6 17.2 L96 15.4 V17 L2.8 19 Z" fill="#8e8f8a" opacity="0.6"/><rect x="0" y="5.8" width="11" height="7.4" rx="1" fill="#c8c7a4"/><rect x="5.6" y="19.6" width="4.6" height="6" fill="#d0d0c4"/><rect x="11.6" y="18.8" width="26" height="1.1" fill="#8c8c8c"/><rect x="11.6" y="21.6" width="30" height="1.1" fill="#7c7c7c"/><rect x="53" y="21.8" width="12" height="0.9" fill="#999"/><rect x="68" y="22" width="9" height="0.9" fill="#aaa"/><path d="M47.6 18 L52.2 22.6 L47.6 27.2 L43 22.6 Z" fill="#f0a428"/><rect x="6.8" y="28.8" width="4.6" height="0.9" fill="#999"/><rect x="17" y="28.8" width="79" height="1.1" fill="#8c8c8c"/><rect x="6.8" y="31.6" width="89" height="1.1" fill="#9a9a9a"/><rect x="6.8" y="34.2" width="89" height="1" fill="#a8a8a8"/><rect x="6.8" y="36.8" width="70" height="1.1" fill="#9c9c9c"/><rect x="79" y="36.8" width="17" height="1.1" fill="#7c7c7c"/><rect x="6.8" y="39.2" width="13" height="1" fill="#9c9c9c"/><rect x="6.8" y="41" width="14" height="1.1" fill="#6c6c6c"/><rect x="60" y="40" width="8" height="0.8" fill="#aaa"/><rect x="7.4" y="44.6" width="88.6" height="0.8" fill="#c4c4c2"/><rect x="8" y="47.6" width="88" height="8.6" fill="#f3f3f1" stroke="#a0a09e" stroke-width="0.6"/><rect x="8" y="47.6" width="88" height="1.4" fill="#b8b8b6"/><rect x="9.2" y="50.8" width="5" height="0.9" fill="#9c9c9c"/><rect x="14.8" y="50.8" width="9.4" height="0.9" fill="#e0702c"/><rect x="25" y="50.8" width="35" height="1" fill="#8c8c8c"/><rect x="9.2" y="53" width="30" height="0.9" fill="#9c9c9c"/><rect x="8.4" y="55" width="19" height="0.8" fill="#aaa"/><rect x="63" y="58.8" width="2.4" height="1.5" fill="#3cb44a"/><rect x="66.4" y="59.2" width="29" height="0.9" fill="#888"/><rect x="25.4" y="73.2" width="55" height="1.2" fill="#555"/><rect x="25.8" y="77.2" width="57" height="1.2" fill="#4c4c4c"/><rect x="25.8" y="79.2" width="57" height="0.5" fill="#7c7c7c"/><rect x="46" y="94.6" width="18" height="1" fill="#9c9c9c"/><ellipse cx="31.3" cy="31" rx="12.4" ry="9.6" fill="none" stroke="#f0306e" stroke-width="1.6" transform="rotate(-8 31.3 31)"/></svg><span class="c" style="left:803px">hardware</span><span class="c" style="left:1040px;width:43px;text-align:right">0.6</span></div>
<div class="r" style="top:342px"><div class="pin"><span class="cb"></span><span class="nm">support_router</span><span class="idb">a4be</span></div><span class="st ok"><svg width="16" height="16" viewBox="0 0 16 16"><circle cx="8" cy="8" r="5.45" fill="none" stroke="#0f8a60" stroke-width="1.05"/><path d="M6 8.2 L7.4 9.5 L10.1 7" fill="none" stroke="#0f8a60" stroke-width="1.1"/></svg></span><span class="c" style="left:503px">I’m unable to log in…</span><svg class="th" viewBox="0 0 37 37" preserveAspectRatio="none"><rect width="37" height="37" fill="#fff"/><text x="18.5" y="9" text-anchor="middle" font-size="3.6" font-family="Liberation Sans, sans-serif" fill="#111" letter-spacing="-0.1">Lenoraly Lonly</text><rect x="13" y="12.4" width="12" height="0.6" fill="#777"/><text x="18.5" y="19" text-anchor="middle" font-size="2.5" font-family="Liberation Sans, sans-serif" fill="#222">Trendrin onlosd</text><rect x="6.4" y="22.6" width="24.6" height="4" rx="2" fill="#1f4fe0"/><rect x="11.6" y="28.8" width="4.4" height="0.7" fill="#e03030"/></svg><span class="c" style="left:803px">login</span><span class="c" style="left:1040px;width:43px;text-align:right">0.4</span></div>
<div class="r" style="top:380px"><div class="pin"><span class="cb"></span><span class="nm">support_router</span><span class="idb">6535</span></div><span class="chip" style="left:294px"><svg width="18" height="18" viewBox="0 0 18 18"><g transform="translate(0,18.4) scale(1,-1)"><path d="M9 0.9 C10.6 0.9 11.9 1.8 11.9 3.4 L11.7 7.6 L15.6 7.6 C17.2 7.8 17.4 9.6 16.5 10.2 C17.4 10.9 17.3 12.4 16.4 12.8 C17.1 13.5 16.9 15 16 15.2 C16.4 16.4 15.6 17.7 14.2 17.7 L11 17.7 C10.2 17.7 9.6 17.2 9.2 16.6 L2.6 16.4 C1.2 16.4 0.6 15.4 0.6 14.2 L0.7 11.4 C0.7 10.2 1.4 9.6 2.4 9.4 C4.4 8.8 6 7.2 6.6 5.2 L7.2 2.6 C7.4 1.6 8 0.9 9 0.9 Z" fill="#fcc62f"/><path d="M11 10.2 H16.2 M10.8 12.8 H16.2 M11 15.2 H15.8 M9.6 9 C9.2 11 9.2 14 9.6 16.4" fill="none" stroke="#e8a422" stroke-width="0.7"/></g></svg><b>1</b></span><span class="st ok"><svg width="16" height="16" viewBox="0 0 16 16"><circle cx="8" cy="8" r="5.45" fill="none" stroke="#0f8a60" stroke-width="1.05"/><path d="M6 8.2 L7.4 9.5 L10.1 7" fill="none" stroke="#0f8a60" stroke-width="1.1"/></svg></span><span class="c" style="left:503px">My computer won’t…</span><svg class="th" viewBox="0 0 37 37" preserveAspectRatio="none"><rect width="37" height="37" fill="#14161a"/><path d="M0 0 H37 V3 L0 3.6 Z" fill="#cfc6ae"/><circle cx="19" cy="10" r="5" fill="#1c2a3c" opacity="0.7"/><rect x="7" y="17.2" width="25" height="1.2" fill="#e8e8e8"/><rect x="7" y="19.8" width="24" height="0.9" fill="#c8c8c8"/><path d="M0 33.4 L37 31.6 V37 H0 Z" fill="#c3c6cc"/><path d="M20 32.4 L37 31.6 V37 H26 Z" fill="#e4e8ee"/></svg><span class="c" style="left:803px">hardware</span><span class="c" style="left:1040px;width:43px;text-align:right">0.8</span></div>
<div class="r" style="top:418px"><div class="pin"><span class="cb"></span><span class="nm">support_router</span><span class="idb">3680</span></div><span class="st run"><svg width="16" height="16" viewBox="0 0 16 16"><path d="M3.1 8.6 A4.9 4.9 0 1 0 5 4.2" fill="none" stroke="#5f9222" stroke-width="1.15"/><path d="M3.4 2.7 V5.8 H6.4" fill="none" stroke="#5f9222" stroke-width="1.15"/></svg></span><span class="c" style="left:503px">I’m unable to log in…</span><span class="c na" style="left:653px">N/A</span><span class="c na" style="left:803px">N/A</span><span class="c na" style="left:953px">N/A</span><span class="c na" style="left:1103px">N/A</span></div>
<div class="r" style="top:456px"><div class="pin"><span class="cb"></span><span class="nm">support_router</span><span class="idb">360c</span></div><span class="chip" style="left:294px"><svg width="18" height="18" viewBox="0 0 18 18"><path d="M9 0.9 C10.6 0.9 11.9 1.8 11.9 3.4 L11.7 7.6 L15.6 7.6 C17.2 7.8 17.4 9.6 16.5 10.2 C17.4 10.9 17.3 12.4 16.4 12.8 C17.1 13.5 16.9 15 16 15.2 C16.4 16.4 15.6 17.7 14.2 17.7 L11 17.7 C10.2 17.7 9.6 17.2 9.2 16.6 L2.6 16.4 C1.2 16.4 0.6 15.4 0.6 14.2 L0.7 11.4 C0.7 10.2 1.4 9.6 2.4 9.4 C4.4 8.8 6 7.2 6.6 5.2 L7.2 2.6 C7.4 1.6 8 0.9 9 0.9 Z" fill="#fcc62f"/><path d="M11 10.2 H16.2 M10.8 12.8 H16.2 M11 15.2 H15.8 M9.6 9 C9.2 11 9.2 14 9.6 16.4" fill="none" stroke="#e8a422" stroke-width="0.7"/></svg><b>1</b></span><span class="st ok"><svg width="16" height="16" viewBox="0 0 16 16"><circle cx="8" cy="8" r="5.45" fill="none" stroke="#0f8a60" stroke-width="1.05"/><path d="M6 8.2 L7.4 9.5 L10.1 7" fill="none" stroke="#0f8a60" stroke-width="1.1"/></svg></span><span class="c" style="left:503px">My computer won’t…</span><svg class="th" viewBox="0 0 37 37" preserveAspectRatio="none"><defs><radialGradient id="g36" cx="0.5" cy="0.45" r="0.7"><stop offset="0" stop-color="#3a3a3a"/><stop offset="1" stop-color="#141414"/></radialGradient></defs><rect width="37" height="37" fill="url(#g36)"/><rect y="1" width="37" height="3.4" fill="#c9c9c9"/><rect x="7" y="1.6" width="8" height="1.4" fill="#f2f2f2"/><rect x="3" y="15.4" width="1.2" height="1.2" fill="#fff"/><rect x="5" y="15.2" width="27" height="1" fill="#ededed" transform="rotate(-2 5 15)"/><rect x="5" y="17.4" width="29" height="1" fill="#e0e0e0" transform="rotate(-2 5 17)"/><rect x="5" y="19.6" width="10" height="0.9" fill="#d0d0d0"/><path d="M0 37 L37 32.6 V37 Z" fill="#cfcfcf"/><path d="M12 37 L37 34.2 V37 Z" fill="#f0f0f0"/></svg><span class="c" style="left:803px">hardware</span><span class="c" style="left:1040px;width:43px;text-align:right">0.8</span></div>
<div class="r" style="top:494px"><div class="pin"><span class="cb"></span><span class="nm">support_router</span><span class="idb">4491</span></div><span class="chip" style="left:294px"><svg width="18" height="18" viewBox="0 0 18 18"><g transform="translate(0,18.4) scale(1,-1)"><path d="M9 0.9 C10.6 0.9 11.9 1.8 11.9 3.4 L11.7 7.6 L15.6 7.6 C17.2 7.8 17.4 9.6 16.5 10.2 C17.4 10.9 17.3 12.4 16.4 12.8 C17.1 13.5 16.9 15 16 15.2 C16.4 16.4 15.6 17.7 14.2 17.7 L11 17.7 C10.2 17.7 9.6 17.2 9.2 16.6 L2.6 16.4 C1.2 16.4 0.6 15.4 0.6 14.2 L0.7 11.4 C0.7 10.2 1.4 9.6 2.4 9.4 C4.4 8.8 6 7.2 6.6 5.2 L7.2 2.6 C7.4 1.6 8 0.9 9 0.9 Z" fill="#fcc62f"/><path d="M11 10.2 H16.2 M10.8 12.8 H16.2 M11 15.2 H15.8 M9.6 9 C9.2 11 9.2 14 9.6 16.4" fill="none" stroke="#e8a422" stroke-width="0.7"/></g></svg><b>1</b></span><span class="st ok"><svg width="16" height="16" viewBox="0 0 16 16"><circle cx="8" cy="8" r="5.45" fill="none" stroke="#0f8a60" stroke-width="1.05"/><path d="M6 8.2 L7.4 9.5 L10.1 7" fill="none" stroke="#0f8a60" stroke-width="1.1"/></svg></span><span class="c" style="left:503px">I am having trouble…</span><svg class="th" viewBox="0 0 37 37" preserveAspectRatio="none"><rect width="37" height="37" fill="#cfd3c8"/><g fill="#17181a"><rect x="-2" y="-3" width="8" height="5" rx="1"/><rect x="12" y="-3" width="14" height="5" rx="1"/><rect x="30" y="-3" width="9" height="5" rx="1"/><rect x="-4" y="5" width="11.6" height="11" rx="1.4"/><rect x="10.4" y="5" width="14" height="11" rx="1.4"/><rect x="27.4" y="5" width="12" height="11" rx="1.4"/><rect x="-2" y="26" width="26" height="12" rx="1.4"/><rect x="26.6" y="26" width="12" height="12" rx="1.4"/></g><rect x="0.4" y="18.6" width="10.6" height="5.6" rx="1" fill="#d8101c"/><rect x="12.8" y="18.6" width="8" height="5.6" rx="1" fill="#7cc0ee"/><rect x="22.4" y="18.6" width="12" height="5.6" rx="1" fill="#d8101c"/><rect x="36" y="18.6" width="2" height="5.6" fill="#7cc0ee"/><text x="15.6" y="12.4" font-size="4.2" font-family="Liberation Sans, sans-serif" font-weight="700" fill="#ddd">R</text><text x="31" y="12.4" font-size="4.2" font-family="Liberation Sans, sans-serif" font-weight="700" fill="#ccc">T</text><text x="9.6" y="34" font-size="5" font-family="Liberation Sans, sans-serif" font-weight="700" fill="#eee">UU</text><text x="28" y="34.6" font-size="4.6" font-family="Liberation Sans, sans-serif" font-weight="700" fill="#ddd">R</text><text x="0" y="12" font-size="3.6" font-family="Liberation Sans, sans-serif" font-weight="700" fill="#ccc">K</text></svg><span class="c" style="left:803px">network</span><span class="c" style="left:1040px;width:43px;text-align:right">0.3</span></div>
<div class="r" style="top:532px"><div class="pin"><span class="cb"></span><span class="nm">support_router</span><span class="idb">8f5a</span></div><span class="st ok"><svg width="16" height="16" viewBox="0 0 16 16"><circle cx="8" cy="8" r="5.45" fill="none" stroke="#0f8a60" stroke-width="1.05"/><path d="M6 8.2 L7.4 9.5 L10.1 7" fill="none" stroke="#0f8a60" stroke-width="1.1"/></svg></span><span class="c" style="left:503px">I’m experiencing sl…</span><svg class="th" viewBox="0 0 37 37" preserveAspectRatio="none"><rect width="37" height="37" fill="#fff"/><path d="M13.6 9.6 A9 9 0 0 1 29.4 9.6" fill="none" stroke="#555" stroke-width="0.9" stroke-dasharray="0.9 1.5"/><path d="M20.6 12.4 L22.4 6.6" stroke="#c8281c" stroke-width="0.8"/><rect x="4.4" y="11.6" width="14" height="1.7" fill="#e8281c"/><rect x="18.4" y="11.6" width="4" height="1.7" fill="#f05a1c"/><rect x="22.4" y="11.6" width="14.6" height="1.7" fill="#f59a1c"/><text x="21" y="18.2" text-anchor="middle" font-size="2.6" font-family="Liberation Sans, sans-serif" font-weight="700" fill="#222" letter-spacing="-0.1">usig dnatisnan dorlart</text><rect x="11.6" y="29" width="20" height="0.5" fill="#aaa"/></svg><span class="c" style="left:803px">network</span><span class="c" style="left:1040px;width:43px;text-align:right">0.4</span></div>
<div class="r" style="top:570px"><div class="pin"><span class="cb"></span><span class="nm">support_router</span><span class="idb">9922</span></div><span class="chip" style="left:294px"><svg width="18" height="18" viewBox="0 0 18 18"><g transform="translate(0,18.4) scale(1,-1)"><path d="M9 0.9 C10.6 0.9 11.9 1.8 11.9 3.4 L11.7 7.6 L15.6 7.6 C17.2 7.8 17.4 9.6 16.5 10.2 C17.4 10.9 17.3 12.4 16.4 12.8 C17.1 13.5 16.9 15 16 15.2 C16.4 16.4 15.6 17.7 14.2 17.7 L11 17.7 C10.2 17.7 9.6 17.2 9.2 16.6 L2.6 16.4 C1.2 16.4 0.6 15.4 0.6 14.2 L0.7 11.4 C0.7 10.2 1.4 9.6 2.4 9.4 C4.4 8.8 6 7.2 6.6 5.2 L7.2 2.6 C7.4 1.6 8 0.9 9 0.9 Z" fill="#fcc62f"/><path d="M11 10.2 H16.2 M10.8 12.8 H16.2 M11 15.2 H15.8 M9.6 9 C9.2 11 9.2 14 9.6 16.4" fill="none" stroke="#e8a422" stroke-width="0.7"/></g></svg><b>1</b></span><span class="st ok"><svg width="16" height="16" viewBox="0 0 16 16"><circle cx="8" cy="8" r="5.45" fill="none" stroke="#0f8a60" stroke-width="1.05"/><path d="M6 8.2 L7.4 9.5 L10.1 7" fill="none" stroke="#0f8a60" stroke-width="1.1"/></svg></span><span class="c" style="left:503px">I accidentally delet…</span><svg class="th" viewBox="0 0 37 37" preserveAspectRatio="none"><defs><linearGradient id="g99" x1="0" y1="0" x2="1" y2="1"><stop offset="0" stop-color="#c2c3d0"/><stop offset="0.6" stop-color="#e2e2ea"/><stop offset="1" stop-color="#cbccd8"/></linearGradient></defs><rect width="37" height="37" fill="url(#g99)"/><rect width="37" height="1.4" fill="#6e7080"/><path d="M14 10 L28 5 L36 24 L22 30 Z" fill="#fafafc" opacity="0.85"/><path d="M17.6 7.6 L25.6 10.6 L15.6 25.6 L6.6 19.6 Z" fill="#1b1115"/><path d="M23.4 9.8 L25.6 10.6 L24.6 12.2 Z" fill="#ee8a1c"/><path d="M12 21 L22 10" stroke="#5a3a4a" stroke-width="0.5"/><rect x="4.6" y="6.4" width="5.4" height="0.8" fill="#99a"/><text x="18.5" y="33" text-anchor="middle" font-size="3.6" font-family="Liberation Sans, sans-serif" fill="#222" letter-spacing="-0.1">Acaca. dcecdcs</text><rect y="35.8" width="37" height="1.2" fill="#7e8092"/></svg><span class="c" style="left:803px">data recovery</span><span class="c" style="left:1040px;width:43px;text-align:right">0.8</span></div>
<div class="r" style="top:608px"><div class="pin"><span class="cb"></span><span class="nm">support_router</span><span class="idb">4f67</span></div><span class="st er"><svg width="16" height="16" viewBox="0 0 16 16"><circle cx="8" cy="8" r="5.45" fill="none" stroke="#cf2c48" stroke-width="1.1"/><rect x="6.9" y="6.9" width="2.2" height="2.2" fill="#c8102e"/></svg></span><span class="c" style="left:503px">My monitor is displ…</span><span class="c na" style="left:653px">N/A</span><span class="c na" style="left:803px">N/A</span><span class="c na" style="left:953px">N/A</span><span class="c na" style="left:1103px">N/A</span></div>
<div class="r" style="top:646px"><div class="pin"><span class="cb"></span><span class="nm">support_router</span><span class="idb">b9ca</span></div><span class="st ok"><svg width="16" height="16" viewBox="0 0 16 16"><circle cx="8" cy="8" r="5.45" fill="none" stroke="#0f8a60" stroke-width="1.05"/><path d="M6 8.2 L7.4 9.5 L10.1 7" fill="none" stroke="#0f8a60" stroke-width="1.1"/></svg></span><span class="c" style="left:503px">The software I’m us…</span><svg class="th" viewBox="0 0 37 37" preserveAspectRatio="none"><defs><linearGradient id="gb9" x1="0" y1="0" x2="1" y2="1"><stop offset="0" stop-color="#f5a81c"/><stop offset="0.5" stop-color="#f0641c"/><stop offset="1" stop-color="#f7b02c"/></linearGradient></defs><rect width="37" height="37" fill="#2d2e30"/><rect width="37" height="5" fill="#f6c500"/><rect y="31" width="37" height="6" fill="url(#gb9)"/><path d="M0 33 Q18 31 37 34.6" stroke="#f8d05c" stroke-width="0.5" fill="none"/><rect x="2" y="7.6" width="11" height="0.9" fill="#bbb"/><rect x="2" y="12" width="29" height="1.2" fill="#f2f2f2"/><rect x="2" y="14.6" width="19" height="1.1" fill="#e4e4e4"/><rect x="13" y="18" width="10" height="0.8" fill="#aaa"/><rect y="20.4" width="37" height="0.4" fill="#555"/><rect x="34" y="22.4" width="3" height="0.5" fill="#888"/><circle cx="4" cy="27.2" r="1.9" fill="#fff"/><circle cx="4" cy="27.2" r="0.8" fill="#e85a4a"/><rect x="14" y="26.8" width="11" height="0.9" fill="#ddd"/><rect y="29.6" width="37" height="0.4" fill="#555"/></svg><span class="c" style="left:803px">bug</span><span class="c" style="left:1040px;width:43px;text-align:right">0.6</span></div>
<div class="r" style="top:684px"><div class="pin"><span class="cb"></span><span class="nm">support_router</span><span class="idb">ac77</span></div><span class="st ok"><svg width="16" height="16" viewBox="0 0 16 16"><circle cx="8" cy="8" r="5.45" fill="none" stroke="#0f8a60" stroke-width="1.05"/><path d="M6 8.2 L7.4 9.5 L10.1 7" fill="none" stroke="#0f8a60" stroke-width="1.1"/></svg></span><span class="c" style="left:503px">I can’t connect to t…</span><svg class="th" viewBox="0 0 37 37" preserveAspectRatio="none"><defs><radialGradient id="gac" cx="0.55" cy="0.0" r="1.0"><stop offset="0" stop-color="#f1f3dc"/><stop offset="0.3" stop-color="#c9cac4"/><stop offset="0.7" stop-color="#b3b4b0"/><stop offset="1" stop-color="#9a9c98"/></radialGradient><linearGradient id="gac2" x1="0" y1="0" x2="0" y2="1"><stop offset="0.5" stop-color="#fff" stop-opacity="0"/><stop offset="1" stop-color="#c8d0cf" stop-opacity="0.9"/></linearGradient></defs><rect width="37" height="37" fill="url(#gac)"/><rect width="37" height="37" fill="url(#gac2)"/><rect x="4" y="10.8" width="20" height="2.2" fill="#1c1cc0"/><rect x="24" y="11.8" width="13" height="0.4" fill="#99a"/><text x="2.6" y="21.6" font-size="3.1" font-family="Liberation Sans, sans-serif" font-weight="700" fill="#111" letter-spacing="-0.15">5kn Flw cel sell IYI ssed</text><text x="2" y="26.2" font-size="3.1" font-family="Liberation Sans, sans-serif" font-weight="700" fill="#111" letter-spacing="-0.15">Yert Stif. beedd wesd ure p</text></svg><span class="c" style="left:803px">networking</span><span class="c" style="left:1040px;width:43px;text-align:right">0.6</span></div>
<div class="r" style="top:722px"><div class="pin"><span class="cb"></span><span class="nm">support_router</span><span class="idb">9dec</span></div><span class="st er"><svg width="16" height="16" viewBox="0 0 16 16"><circle cx="8" cy="8" r="5.45" fill="none" stroke="#cf2c48" stroke-width="1.1"/><rect x="6.9" y="6.9" width="2.2" height="2.2" fill="#c8102e"/></svg></span><span class="c" style="left:503px">The sound on my la…</span><span class="c na" style="left:653px">N/A</span><span class="c na" style="left:803px">N/A</span><span class="c na" style="left:953px">N/A</span><span class="c na" style="left:1103px">N/A</span></div>
</div>
<div id="foot">
 <svg class="abs" style="left:20px;top:20px" width="8" height="12" viewBox="0 0 8 12"><path d="M6 1.5 L1.8 6 L6 10.5" fill="none" stroke="#c5c8cc" stroke-width="1.2"/></svg>
 <div class="abs nw" style="left:64px;top:16px;line-height:20px;font-size:13px;color:#6b7684;letter-spacing:0">1-25 of 25</div>
 <svg class="abs" style="left:159px;top:20px" width="8" height="12" viewBox="0 0 8 12"><path d="M2 1.5 L6.2 6 L2 10.5" fill="none" stroke="#c5c8cc" stroke-width="1.2"/></svg>
</div>
<div id="rp">
 <div id="rph">
  <svg class="abs" style="left:25px;top:15px" width="14" height="14" viewBox="0 0 14 14"><path d="M7 13 V1.4 M2.6 5.8 L7 1.4 L11.4 5.8" fill="none" stroke="#2b3038" stroke-width="1.3"/></svg>
  <svg class="abs" style="left:59px;top:15px" width="14" height="14" viewBox="0 0 14 14"><path d="M7 1 V12.6 M2.6 8.2 L7 12.6 L11.4 8.2" fill="none" stroke="#2b3038" stroke-width="1.3"/></svg>
  <div class="abs" style="left:518px;top:6px;width:32px;height:32px;border-radius:4px;background:#d6f3f7"><svg class="abs" style="left:7px;top:7px" width="18" height="18" viewBox="0 0 20 20"><g fill="none" stroke="#0f96aa" stroke-width="1.35" stroke-linecap="round"><rect x="2.4" y="3.2" width="9.2" height="5.1" rx="2.5"/><path d="M5.4 10.2 C5.4 11.6 6.2 12.4 7.4 12.4 H12.6 C14.2 12.4 15.05 11.4 15.05 9.8 C15.05 8.6 14.4 7.8 13.5 7.4"/><path d="M8.4 14.4 C8.6 15.6 9.4 16.35 10.6 16.35 H15.2 C16.8 16.35 17.5 15.4 17.5 13.8 C17.5 12.6 17 11.8 16.4 11.3"/></g></svg></div>
  <svg class="abs" style="left:561px;top:13px" width="18" height="18" viewBox="0 0 18 18"><g fill="none" stroke="#2b3038" stroke-width="1.2" stroke-linejoin="round"><path d="M3.2 13.4 L4.2 9.6 L11.6 2.2 A1.7 1.7 0 0 1 14 2.2 L14.6 2.8 A1.7 1.7 0 0 1 14.6 5.2 L7.2 12.6 Z"/><path d="M10.4 3.6 L13.2 6.4 M4.4 9.6 L7 12.4"/><path d="M1.6 16.6 H15.6"/></g></svg>
  <svg class="abs" style="left:598px;top:14px" width="16" height="16" viewBox="0 0 16 16"><path d="M1.9 5.8 V3.7 A1.8 1.8 0 0 1 3.7 1.9 H5.8 M10.2 1.9 H12.3 A1.8 1.8 0 0 1 14.1 3.7 V5.8 M14.1 10.2 V12.3 A1.8 1.8 0 0 1 12.3 14.1 H10.2 M5.8 14.1 H3.7 A1.8 1.8 0 0 1 1.9 12.3 V10.2" fill="none" stroke="#2b3038" stroke-width="1.3"/></svg>
  <svg class="abs" style="left:635px;top:15px" width="14" height="14" viewBox="0 0 14 14"><path d="M1.4 1.4 L12.6 12.6 M12.6 1.4 L1.4 12.6" fill="none" stroke="#2b3038" stroke-width="1.4"/></svg>
 </div>
 <div id="tree">
  <div class="abs" style="left:0;top:0;width:341px;height:64px;background:#e1f7fa"></div>
  <div class="abs" style="left:36px;top:64px;width:1px;height:192px;background:#e0e0e0"></div>
  <div class="abs" style="left:36px;top:149px;width:39px;height:1px;background:#e0e0e0"></div>
  <svg class="abs" style="left:30px;top:17px" width="14" height="9" viewBox="0 0 14 9"><path d="M1.8 1.6 L7 6.8 L12.2 1.6" fill="none" stroke="#a3a8b0" stroke-width="1.8"/></svg>
  <span class="sti" style="left:64px;top:10px"><svg width="16" height="16" viewBox="0 0 16 16"><circle cx="8" cy="8" r="5.45" fill="none" stroke="#0f8a60" stroke-width="1.05"/><path d="M6 8.2 L7.4 9.5 L10.1 7" fill="none" stroke="#0f8a60" stroke-width="1.1"/></svg></span>
  <div class="tn" style="left:98px;top:11px;letter-spacing:0.26px">support_router</div>
  <svg class="abs" style="left:69px;top:42px" width="13" height="13" viewBox="0 0 13 13"><circle cx="6.5" cy="6.5" r="5.4" fill="none" stroke="#7b828c" stroke-width="1"/><path d="M6.5 3.4 V6.7 H9" fill="none" stroke="#7b828c" stroke-width="1"/></svg>
  <div class="ts" style="left:86px;top:39px">9.43s</div>
  <svg class="abs" style="left:129px;top:42px" width="12" height="13" viewBox="0 0 12 13"><g fill="none" stroke="#7b828c" stroke-width="1"><ellipse cx="6" cy="2.8" rx="4.4" ry="1.8"/><path d="M1.6 2.8 V10.2 C1.6 12.6 10.4 12.6 10.4 10.2 V2.8 M1.6 5.4 C1.6 7.6 10.4 7.6 10.4 5.4 M1.6 7.9 C1.6 10.1 10.4 10.1 10.4 7.9"/></g></svg>
  <div class="ts" style="left:146px;top:39px">137</div>
  <div class="ts" style="left:181px;top:39px">$&lt;0.01</div>

  <svg class="abs" style="left:60px;top:78px" width="9" height="14" viewBox="0 0 9 14"><path d="M1.6 1.8 L6.8 7 L1.6 12.2" fill="none" stroke="#a3a8b0" stroke-width="1.8"/></svg>
  <span class="sti" style="left:91px;top:74px"><svg width="16" height="16" viewBox="0 0 16 16"><circle cx="8" cy="8" r="5.45" fill="none" stroke="#0f8a60" stroke-width="1.05"/><path d="M6 8.2 L7.4 9.5 L10.1 7" fill="none" stroke="#0f8a60" stroke-width="1.1"/></svg></span>
  <div class="tn" style="left:125px;top:75px;letter-spacing:-0.16px">generate_response</div>
  <svg class="abs" style="left:96px;top:106px" width="13" height="13" viewBox="0 0 13 13"><circle cx="6.5" cy="6.5" r="5.4" fill="none" stroke="#7b828c" stroke-width="1"/><path d="M6.5 3.4 V6.7 H9" fill="none" stroke="#7b828c" stroke-width="1"/></svg>
  <div class="ts" style="left:113px;top:103px">1.35s</div>
  <svg class="abs" style="left:156px;top:106px" width="12" height="13" viewBox="0 0 12 13"><g fill="none" stroke="#7b828c" stroke-width="1"><ellipse cx="6" cy="2.8" rx="4.4" ry="1.8"/><path d="M1.6 2.8 V10.2 C1.6 12.6 10.4 12.6 10.4 10.2 V2.8 M1.6 5.4 C1.6 7.6 10.4 7.6 10.4 5.4 M1.6 7.9 C1.6 10.1 10.4 10.1 10.4 7.9"/></g></svg>
  <div class="ts" style="left:173px;top:103px">137</div>
  <div class="ts" style="left:208px;top:103px">$&lt;0.01</div>

  <span class="sti" style="left:91px;top:138px"><svg width="16" height="16" viewBox="0 0 16 16"><circle cx="8" cy="8" r="5.45" fill="none" stroke="#0f8a60" stroke-width="1.05"/><path d="M6 8.2 L7.4 9.5 L10.1 7" fill="none" stroke="#0f8a60" stroke-width="1.1"/></svg></span>
  <div class="tn" style="left:125px;top:139px;letter-spacing:0.17px">image_prompt</div>
  <svg class="abs" style="left:96px;top:170px" width="13" height="13" viewBox="0 0 13 13"><circle cx="6.5" cy="6.5" r="5.4" fill="none" stroke="#7b828c" stroke-width="1"/><path d="M6.5 3.4 V6.7 H9" fill="none" stroke="#7b828c" stroke-width="1"/></svg>
  <div class="ts" style="left:113px;top:167px">&lt;0.01s</div>

  <svg class="abs" style="left:60px;top:206px" width="9" height="14" viewBox="0 0 9 14"><path d="M1.6 1.8 L6.8 7 L1.6 12.2" fill="none" stroke="#a3a8b0" stroke-width="1.8"/></svg>
  <span class="sti" style="left:91px;top:202px"><svg width="16" height="16" viewBox="0 0 16 16"><circle cx="8" cy="8" r="5.45" fill="none" stroke="#0f8a60" stroke-width="1.05"/><path d="M6 8.2 L7.4 9.5 L10.1 7" fill="none" stroke="#0f8a60" stroke-width="1.1"/></svg></span>
  <div class="tn" style="left:125px;top:203px;letter-spacing:-0.11px">generate_image</div>
  <svg class="abs" style="left:96px;top:234px" width="13" height="13" viewBox="0 0 13 13"><circle cx="6.5" cy="6.5" r="5.4" fill="none" stroke="#7b828c" stroke-width="1"/><path d="M6.5 3.4 V6.7 H9" fill="none" stroke="#7b828c" stroke-width="1"/></svg>
  <div class="ts" style="left:113px;top:231px">7.88s</div>
 </div>
 <div id="det">
  <span class="sti" style="left:20px;top:15px"><svg width="16" height="16" viewBox="0 0 16 16"><circle cx="8" cy="8" r="5.45" fill="none" stroke="#0f8a60" stroke-width="1.05"/><path d="M6 8.2 L7.4 9.5 L10.1 7" fill="none" stroke="#0f8a60" stroke-width="1.1"/></svg></span>
  <div class="abs nw" style="left:50px;top:15px;line-height:24px;font-size:15.5px;font-weight:700;color:#2b3038;letter-spacing:-0.45px">support_router</div>
  <div class="abs" style="left:167px;top:16px;width:33px;height:20px;border-radius:4px;background:#f0f0f1;font-family:'Liberation Mono',monospace;font-weight:700;font-size:10px;line-height:24px;text-align:center;color:#2b3038">2d7c</div>
  <div class="abs" style="left:216px;top:7px;width:56px;height:36px;overflow:hidden">
   <span class="chip" style="left:0"><svg width="18" height="18" viewBox="0 0 18 18"><path d="M9 0.9 C10.6 0.9 11.9 1.8 11.9 3.4 L11.7 7.6 L15.6 7.6 C17.2 7.8 17.4 9.6 16.5 10.2 C17.4 10.9 17.3 12.4 16.4 12.8 C17.1 13.5 16.9 15 16 15.2 C16.4 16.4 15.6 17.7 14.2 17.7 L11 17.7 C10.2 17.7 9.6 17.2 9.2 16.6 L2.6 16.4 C1.2 16.4 0.6 15.4 0.6 14.2 L0.7 11.4 C0.7 10.2 1.4 9.6 2.4 9.4 C4.4 8.8 6 7.2 6.6 5.2 L7.2 2.6 C7.4 1.6 8 0.9 9 0.9 Z" fill="#fcc62f"/><path d="M11 10.2 H16.2 M10.8 12.8 H16.2 M11 15.2 H15.8 M9.6 9 C9.2 11 9.2 14 9.6 16.4" fill="none" stroke="#e8a422" stroke-width="0.7"/></svg><b>1</b></span>
   <span class="chip" style="left:44px"><svg width="18" height="18" viewBox="0 0 18 18"><defs><radialGradient id="gr" cx="0.5" cy="0.45" r="0.55"><stop offset="0.55" stop-color="#ffdd35"/><stop offset="1" stop-color="#f39c1e"/></radialGradient></defs><g transform="rotate(-32 9 8.9)"><circle cx="9" cy="8.9" r="8.2" fill="url(#gr)"/><path d="M3.2 9.2 Q9 10.6 14.8 9.2 Q14.4 15.4 9 15.4 Q3.6 15.4 3.2 9.2 Z" fill="#9a5a18"/><path d="M3.9 9.7 Q9 11 14.1 9.7 L13.8 11.4 Q9 12.4 4.2 11.4 Z" fill="#fff"/><path d="M6 14 Q9 12.6 12 14 Q9 15.8 6 14 Z" fill="#e8862a"/><path d="M3.4 5.2 L6.6 6.6 L3.6 7.6 M14.6 5.2 L11.4 6.6 L14.4 7.6" fill="none" stroke="#6a3c12" stroke-width="1"/><path d="M1.2 7.4 Q-0.8 9.6 0.8 11 Q2.8 10.6 3 8.4 Z M16.8 7.4 Q18.8 9.6 17.2 11 Q15.2 10.6 15 8.4 Z" fill="#3fb0f0"/></g></svg><b>1</b></span>
  </div>
  <svg class="abs" style="left:292px;top:22px" width="16" height="8" viewBox="0 0 16 8"><g fill="none" stroke="#2b3038" stroke-width="1.1"><circle cx="2.6" cy="4" r="1.6"/><circle cx="8" cy="4" r="1.6"/><circle cx="13.4" cy="4" r="1.6"/></g></svg>
  <div class="tab" style="left:20px;color:#2b3038">Call</div>
  <div class="tab" style="left:75px">Code</div>
  <div class="tab" style="left:138px">Feedback</div>
  <div class="tab" style="left:227px">Summary</div>
  <div class="abs" style="left:20px;top:85px;width:296px;height:1px;background:#e0e0e0"></div>
  <div class="abs" style="left:20px;top:84px;width:23px;height:2px;background:#13a9ba"></div>

  <div class="sec" style="top:115px">Inputs</div>
  <svg class="abs" style="left:197px;top:120px" width="14" height="12" viewBox="0 0 14 12"><path d="M1 1 H13 M1 4.4 H13 M1 7.8 H13 M1 11.2 H13" fill="none" stroke="#565c66" stroke-width="1.1"/></svg>
  <div class="abs" style="left:220px;top:110px;width:32px;height:32px;border-radius:4px;background:#f3f3f4"><svg class="abs" style="left:9px;top:7px" width="14" height="18" viewBox="0 0 14 18"><path d="M7 1.2 V16.8 M4 4.2 L7 1.2 L10 4.2 M4 13.8 L7 16.8 L10 13.8 M2.2 9 H11.8" fill="none" stroke="#2b3038" stroke-width="1.2"/></svg></div>
  <svg class="abs" style="left:260px;top:120px" width="16" height="12" viewBox="0 0 16 12"><path d="M4.6 1.6 L1 6 L4.6 10.4 M11.4 1.6 L15 6 L11.4 10.4 M9.4 0.6 L6.6 11.4" fill="none" stroke="#565c66" stroke-width="1.1"/></svg>
  <svg class="abs" style="left:291px;top:118px" width="17" height="16" viewBox="0 0 17 16"><g fill="none" stroke="#565c66" stroke-width="1.1"><path d="M1.6 8 C3.8 4.2 6.2 3.2 8.5 3.2 C10.8 3.2 13.2 4.2 15.4 8 C13.2 11.8 10.8 12.8 8.5 12.8 C6.2 12.8 3.8 11.8 1.6 8 Z"/><circle cx="8.5" cy="8" r="2.6"/><path d="M13.8 1.6 L3 14.4"/></g></svg>
  <div class="dh" style="top:146px"></div>
  <div class="dt dhh" style="left:30px;top:156px">Path</div>
  <div class="hsep" style="left:220px;top:154px"></div><div class="hsep" style="left:316px;top:154px"></div>
  <div class="dt dhh" style="left:230px;top:156px">Value</div>
  <div class="dt" style="left:60px;top:195px">user_input</div>
  <div class="dt" style="left:220px;top:195px">The printer is…</div>

  <div class="sec" style="top:262px">Output</div>
  <svg class="abs" style="left:197px;top:267px" width="14" height="12" viewBox="0 0 14 12"><path d="M1 1 H13 M1 4.4 H13 M1 7.8 H13 M1 11.2 H13" fill="none" stroke="#565c66" stroke-width="1.1"/></svg>
  <div class="abs" style="left:220px;top:257px;width:32px;height:32px;border-radius:4px;background:#f3f3f4"><svg class="abs" style="left:9px;top:7px" width="14" height="18" viewBox="0 0 14 18"><path d="M7 1.2 V16.8 M4 4.2 L7 1.2 L10 4.2 M4 13.8 L7 16.8 L10 13.8 M2.2 9 H11.8" fill="none" stroke="#2b3038" stroke-width="1.2"/></svg></div>
  <svg class="abs" style="left:260px;top:267px" width="16" height="12" viewBox="0 0 16 12"><path d="M4.6 1.6 L1 6 L4.6 10.4 M11.4 1.6 L15 6 L11.4 10.4 M9.4 0.6 L6.6 11.4" fill="none" stroke="#565c66" stroke-width="1.1"/></svg>
  <svg class="abs" style="left:291px;top:265px" width="17" height="16" viewBox="0 0 17 16"><g fill="none" stroke="#565c66" stroke-width="1.1"><path d="M1.6 8 C3.8 4.2 6.2 3.2 8.5 3.2 C10.8 3.2 13.2 4.2 15.4 8 C13.2 11.8 10.8 12.8 8.5 12.8 C6.2 12.8 3.8 11.8 1.6 8 Z"/><circle cx="8.5" cy="8" r="2.6"/><path d="M13.8 1.6 L3 14.4"/></g></svg>
  <div class="dh" style="top:293px"></div>
  <div class="dt dhh" style="left:30px;top:303px">Path</div>
  <div class="hsep" style="left:220px;top:300px"></div><div class="hsep" style="left:316px;top:300px"></div>
  <div class="dt dhh" style="left:230px;top:303px">Value</div>
  <svg class="abs" style="left:34px;top:348px" width="12" height="8" viewBox="0 0 12 8"><path d="M1 1.2 L6 6.2 L11 1.2" fill="none" stroke="#7d8590" stroke-width="1"/></svg>
  <div class="dt" style="left:60px;top:341px">response</div>
  <div class="dl" style="top:370px"></div>
  <div class="dt" style="left:80px;top:379px">urgency</div><div class="dt" style="left:220px;top:379px">0.8</div>
  <div class="dl" style="top:408px"></div>
  <div class="dt" style="left:80px;top:418px">category</div><div class="dt" style="left:220px;top:418px">hardware</div>
  <div class="dl" style="top:447px"></div>
  <div class="dt" style="left:80px;top:456px;letter-spacing:0.5px">difficulty</div><div class="dt" style="left:220px;top:456px">0.6</div>
  <div class="dl" style="top:485px"></div>
  <div class="dt" style="left:60px;top:650px">img</div>
  <div class="abs" style="left:220px;top:613px;width:96px;height:96px;overflow:hidden"><svg class="abs" style="left:0;top:0" width="96" height="96" viewBox="0 0 96 96"><defs><linearGradient id="gpq" x1="0" y1="0" x2="0" y2="1"><stop offset="0.15" stop-color="#e2e2e3"/><stop offset="0.5" stop-color="#f3f3f5"/><stop offset="1" stop-color="#f8f8f9"/></linearGradient></defs><rect width="96" height="96" fill="url(#gpq)"/><path d="M0 0 H96 V15.4 L2.6 17.2 L6.8 96 H0 Z" fill="#1c1d19"/><path d="M2.6 17.2 L96 15.4 V17 L2.8 19 Z" fill="#8e8f8a" opacity="0.6"/><rect x="0" y="5.8" width="11" height="7.4" rx="1" fill="#c8c7a4"/><rect x="5.6" y="19.6" width="4.6" height="6" fill="#d0d0c4"/><rect x="11.6" y="18.8" width="26" height="1.1" fill="#8c8c8c"/><rect x="11.6" y="21.6" width="30" height="1.1" fill="#7c7c7c"/><rect x="53" y="21.8" width="12" height="0.9" fill="#999"/><rect x="68" y="22" width="9" height="0.9" fill="#aaa"/><path d="M47.6 18 L52.2 22.6 L47.6 27.2 L43 22.6 Z" fill="#f0a428"/><rect x="6.8" y="28.8" width="4.6" height="0.9" fill="#999"/><rect x="17" y="28.8" width="79" height="1.1" fill="#8c8c8c"/><rect x="6.8" y="31.6" width="89" height="1.1" fill="#9a9a9a"/><rect x="6.8" y="34.2" width="89" height="1" fill="#a8a8a8"/><rect x="6.8" y="36.8" width="70" height="1.1" fill="#9c9c9c"/><rect x="79" y="36.8" width="17" height="1.1" fill="#7c7c7c"/><rect x="6.8" y="39.2" width="13" height="1" fill="#9c9c9c"/><rect x="6.8" y="41" width="14" height="1.1" fill="#6c6c6c"/><rect x="60" y="40" width="8" height="0.8" fill="#aaa"/><rect x="7.4" y="44.6" width="88.6" height="0.8" fill="#c4c4c2"/><rect x="8" y="47.6" width="88" height="8.6" fill="#f3f3f1" stroke="#a0a09e" stroke-width="0.6"/><rect x="8" y="47.6" width="88" height="1.4" fill="#b8b8b6"/><rect x="9.2" y="50.8" width="5" height="0.9" fill="#9c9c9c"/><rect x="14.8" y="50.8" width="9.4" height="0.9" fill="#e0702c"/><rect x="25" y="50.8" width="35" height="1" fill="#8c8c8c"/><rect x="9.2" y="53" width="30" height="0.9" fill="#9c9c9c"/><rect x="8.4" y="55" width="19" height="0.8" fill="#aaa"/><rect x="63" y="58.8" width="2.4" height="1.5" fill="#3cb44a"/><rect x="66.4" y="59.2" width="29" height="0.9" fill="#888"/><rect x="25.4" y="73.2" width="55" height="1.2" fill="#555"/><rect x="25.8" y="77.2" width="57" height="1.2" fill="#4c4c4c"/><rect x="25.8" y="79.2" width="57" height="0.5" fill="#7c7c7c"/><rect x="46" y="94.6" width="18" height="1" fill="#9c9c9c"/><ellipse cx="31.3" cy="31" rx="12.4" ry="9.6" fill="none" stroke="#f0306e" stroke-width="1.6" transform="rotate(-8 31.3 31)"/></svg></div>
 </div>
</div>
</body></html>
